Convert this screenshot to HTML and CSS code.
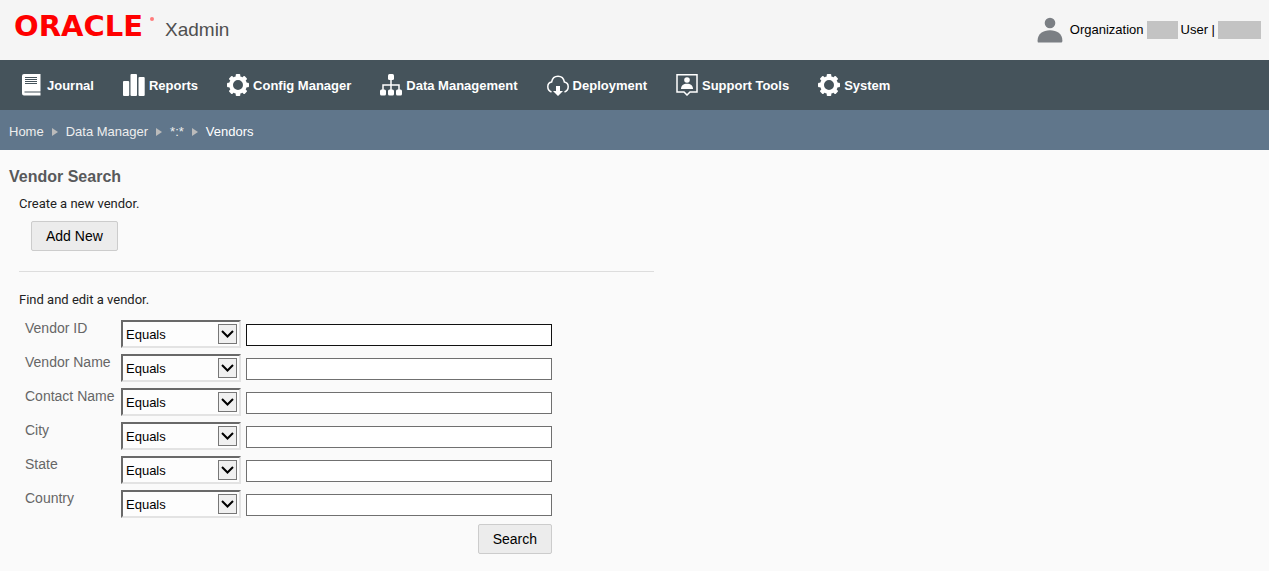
FILE: index.html
```html
<!DOCTYPE html>
<html lang="en">
<head>
<meta charset="utf-8">
<title>Vendor Search</title>
<link rel="stylesheet" href="styles.css">
</head>
<body>

<header class="header">
  <div class="brand">
    <svg class="logo" viewBox="0 0 141 32" role="img" aria-label="Oracle">
      <text class="logo-text" x="0" y="26">ORACLE</text>
      <circle cx="138" cy="9" r="2" fill="#ff7b7b"/>
    </svg>
    <span class="app-name">Xadmin</span>
  </div>
  <div class="user">
    <svg class="user-icon" viewBox="0 0 26 26">
      <circle cx="13" cy="6" r="5.3"/>
      <path d="M1 25.4Q.6 25.4.6 23.5C.8 16.5 6 13.2 13 13.2S25.200 16.500 25.400 23.500Q25.400 25.400 24.500 25.400Z"/>
    </svg>
    <span>Organization</span>
    <span class="masked"></span>
    <span>User |</span>
    <span class="masked masked-wide"></span>
  </div>
</header>

<nav class="nav">
  <a href="#">
    <svg viewBox="0 0 22 22"><path fill-rule="evenodd" d="M3 0H19.500V17.500H3.500V18.500H19.500V21.500H3Q1 21.500 1 19.500V2Q1 0 3 0ZM4 3V4H16V3ZM4 5V6H16V5ZM4 7V8H16V7ZM4 9V10H16V9Z"/></svg>
    <span>Journal</span>
  </a>
  <a href="#">
    <svg viewBox="0 0 22 22"><rect x="0" y="7" width="6.200" height="15" rx="1"/><rect x="7.500" y="0" width="6.500" height="22" rx="1"/><rect x="15.500" y="3" width="6.200" height="19" rx="1"/></svg>
    <span>Reports</span>
  </a>
  <a href="#">
    <svg viewBox="0 0 22 22"><use href="#gear"/></svg>
    <span>Config Manager</span>
  </a>
  <a href="#">
    <svg viewBox="0 0 22 22"><rect x="8" y="0" width="6" height="6" rx="1.500"/><rect x="0" y="15.500" width="6" height="6" rx="1.500"/><rect x="8" y="15.500" width="6" height="6" rx="1.500"/><rect x="16" y="15.500" width="6" height="6" rx="1.500"/><path class="line" d="M11 5V16M3 16V11H19V16"/></svg>
    <span>Data Management</span>
  </a>
  <a href="#">
    <svg viewBox="0 0 22 22"><path class="line" d="M4.500 18C1.800 17 .8 15 .8 12.700C.8 10 2.500 8.300 4.600 8C5.200 4.500 7.800 2.200 11 2.200C14.300 2.200 16.800 4.500 17.400 8C19.700 8.400 21.200 10.200 21.200 12.700C21.200 15 20.200 17 17.500 18"/><path d="M9 12H13V17H16L11 22L6 17H9Z"/></svg>
    <span>Deployment</span>
  </a>
  <a href="#">
    <svg viewBox="0 0 22 22"><path class="line" d="M1 .8H21V18H14L11 21L8 18H1Z"/><circle cx="11" cy="6" r="2.800"/><path d="M5 15C5 11.500 7.500 9.800 11 9.800S17 11.500 17 15Z"/></svg>
    <span>Support Tools</span>
  </a>
  <a href="#">
    <svg viewBox="0 0 22 22">
      <g id="gear">
        <circle cx="11" cy="11" r="7" fill="none" stroke="#fff" stroke-width="4"/>
        <g id="teeth">
          <rect x="8.700" y="0" width="4.600" height="4" rx="1"/>
          <rect x="8.700" y="18" width="4.600" height="4" rx="1"/>
          <rect x="0" y="8.700" width="4" height="4.600" rx="1"/>
          <rect x="18" y="8.700" width="4" height="4.600" rx="1"/>
        </g>
        <use href="#teeth" transform="rotate(45 11 11)"/>
      </g>
    </svg>
    <span>System</span>
  </a>
</nav>

<div class="breadcrumb">
  <a href="#">Home</a>
  <span class="arrow"></span>
  <a href="#">Data Manager</a>
  <span class="arrow"></span>
  <a href="#">*:*</a>
  <span class="arrow"></span>
  <span class="current">Vendors</span>
</div>

<main class="content">
  <h1>Vendor Search</h1>

  <section class="create">
    <p>Create a new vendor.</p>
    <button type="button" class="btn">Add New</button>
  </section>

  <form class="search">
    <p>Find and edit a vendor.</p>
    <div class="fields">
      <label for="vendor-id">Vendor ID</label>
      <div class="select">
        <select aria-label="Vendor ID match"><option>Equals</option></select>
        <svg viewBox="0 0 17 18"><path d="M3 6L8.500 11.500L14 6"/></svg>
      </div>
      <input type="text" id="vendor-id" class="active">

      <label for="vendor-name">Vendor Name</label>
      <div class="select">
        <select aria-label="Vendor Name match"><option>Equals</option></select>
        <svg viewBox="0 0 17 18"><path d="M3 6L8.500 11.500L14 6"/></svg>
      </div>
      <input type="text" id="vendor-name">

      <label for="contact-name">Contact Name</label>
      <div class="select">
        <select aria-label="Contact Name match"><option>Equals</option></select>
        <svg viewBox="0 0 17 18"><path d="M3 6L8.500 11.500L14 6"/></svg>
      </div>
      <input type="text" id="contact-name">

      <label for="city">City</label>
      <div class="select">
        <select aria-label="City match"><option>Equals</option></select>
        <svg viewBox="0 0 17 18"><path d="M3 6L8.500 11.500L14 6"/></svg>
      </div>
      <input type="text" id="city">

      <label for="state">State</label>
      <div class="select">
        <select aria-label="State match"><option>Equals</option></select>
        <svg viewBox="0 0 17 18"><path d="M3 6L8.500 11.500L14 6"/></svg>
      </div>
      <input type="text" id="state">

      <label for="country">Country</label>
      <div class="select">
        <select aria-label="Country match"><option>Equals</option></select>
        <svg viewBox="0 0 17 18"><path d="M3 6L8.500 11.500L14 6"/></svg>
      </div>
      <input type="text" id="country">

      <button type="submit" class="btn submit">Search</button>
    </div>
  </form>
</main>

</body>
</html>
```
FILE: styles.css
```css
* {box-sizing: border-box;}

body {
  margin: 0;
  background: #fafafa;
  color: #222;
  font-family: "Liberation Sans", Arial, sans-serif;
  font-size: 13px;
  line-height: 16px;
}

a {
  color: inherit;
  text-decoration: none;
}

.header {
  display: flex;
  justify-content: space-between;
  align-items: center;
  height: 60px;
  padding: 0 8px 0 14px;
  background: #f5f5f5;
}

.brand {
  display: flex;
  align-items: center;
  gap: 10px;
}

.logo {
  width: 141px;
  height: 32px;
  margin-bottom: 8px;
  overflow: visible;
}

.logo-text {
  fill: #f00;
  font-family: "DejaVu Sans", Verdana, sans-serif;
  font-size: 29px;
  font-weight: bold;
}

.app-name {
  color: #4f4f4f;
  font-size: 19px;
}

.user {
  display: flex;
  align-items: center;
  gap: 3px;
  color: #000;
}

.user-icon {
  width: 26px;
  height: 26px;
  margin-right: 4px;
  fill: #7b7f84;
}

.masked {
  width: 31px;
  height: 18px;
  background: #c3c3c3;
}

.masked-wide {width: 43px;}

.nav {
  display: flex;
  align-items: center;
  gap: 29px;
  height: 50px;
  padding: 0 21px;
  background: #45535b;
  color: #fff;
  font-weight: bold;
}

.nav a {
  display: flex;
  align-items: center;
  gap: 4px;
}

.nav span {padding-top: 2px;}

.nav svg {
  width: 22px;
  height: 22px;
  fill: #fff;
}

.nav .line {
  fill: none;
  stroke: #fff;
  stroke-width: 1.5;
}

.breadcrumb {
  display: flex;
  align-items: center;
  gap: 8px;
  height: 40px;
  padding: 3px 9px 0;
  background: #60768b;
  color: #eee;
}

.breadcrumb .arrow {
  border-left: 6px solid #bbb;
  border-top: 4px solid transparent;
  border-bottom: 4px solid transparent;
}

.breadcrumb .current {color: #fff;}

.content {padding: 17px 9px;}

h1 {
  margin: 0;
  color: #58595b;
  font-size: 16px;
  line-height: 20px;
}

p {
  margin: 0;
  font-family: Roboto, sans-serif;
}

.create {
  max-width: 635px;
  margin-left: 10px;
  padding: 9px 0 20px;
  border-bottom: 1px solid #ddd;
}

.btn {
  height: 30px;
  padding: 0 14px;
  border: 1px solid #ccc;
  border-radius: 2px;
  background: #ececec;
  color: #000;
  font-family: inherit;
  font-size: 14px;
}

.create .btn {
  display: block;
  margin: 9px 0 0 12px;
}

.search {
  margin-left: 10px;
  padding-top: 20px;
}

.fields {
  display: grid;
  grid-template-columns: 90px 121px minmax(0, 306px);
  column-gap: 5px;
  row-gap: 4px;
  align-items: start;
  margin: 12px 0 0 6px;
}

.fields label {
  color: #666;
  font-size: 14px;
  white-space: nowrap;
}

.select {
  position: relative;
  margin: 0 0 2px 1px;
}

.select select {
  display: block;
  width: 100%;
  height: 28px;
  padding: 1px 3px 0;
  appearance: none;
  border: 2px solid;
  border-color: #696969 #e3e3e3 #e3e3e3 #696969;
  border-radius: 0;
  background: #fdfdfd;
  color: #000;
  font-family: inherit;
  font-size: 13px;
}

.select svg {
  position: absolute;
  top: 4px;
  right: 4px;
  width: 19px;
  height: 20px;
  border: 1px solid #777;
  background: #f0f0f0;
  fill: none;
  stroke: #000;
  stroke-width: 2;
  pointer-events: none;
}

.fields input {
  width: 100%;
  height: 22px;
  margin: 4px 0 0;
  padding: 0 4px;
  border: 1px solid #707070;
  background: #fff;
  font-family: inherit;
  font-size: 13px;
}

.fields input.active {border-color: #111;}

.submit {
  grid-column: 3;
  justify-self: end;
}
```
